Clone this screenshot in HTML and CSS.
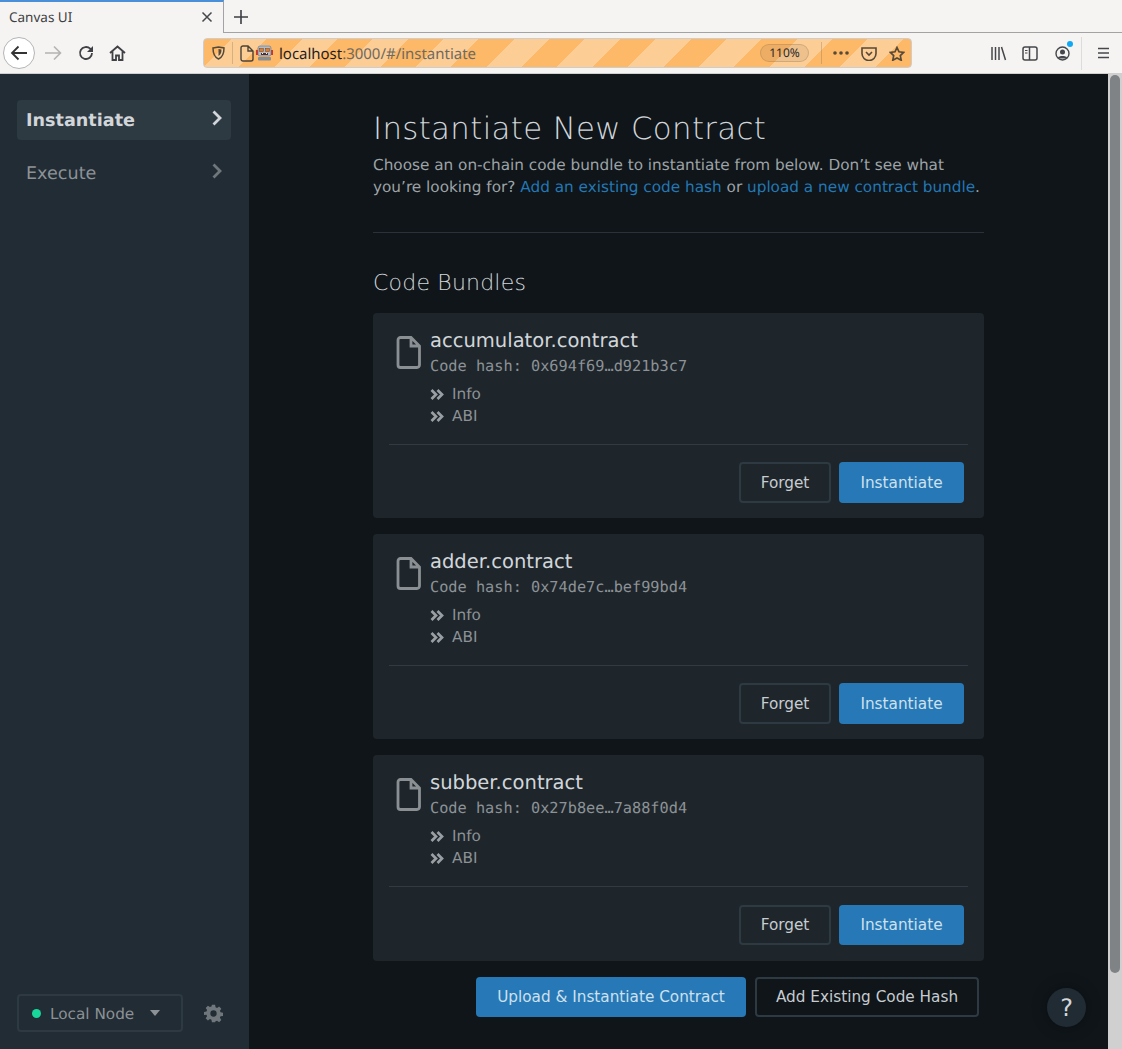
FILE: index.html
```html
<!DOCTYPE html>
<html lang="en">
<head>
    <meta charset="UTF-8">
    <meta name="viewport" content="width=device-width, initial-scale=1.0">
    <title>Canvas UI</title>
    <link rel="stylesheet" href="styles.css">
</head>
<body>

    <!-- Browser chrome -->
    <div class="tabbar">
        <div class="tab">
            <span class="tab-title">Canvas UI</span>
            <svg class="tab-close" width="12" height="12" viewBox="0 0 12 12"><path d="M1.5 1.5l9 9M10.5 1.5l-9 9" stroke="#45474b" stroke-width="1.5" fill="none"/></svg>
        </div>
        <svg class="new-tab" width="14" height="14" viewBox="0 0 14 14"><path d="M7 0v14M0 7h14" stroke="#3c3e42" stroke-width="1.6" fill="none"/></svg>
    </div>
    <div class="toolbar">
        <div class="back-circle">
            <svg width="18" height="16" viewBox="0 0 18 16"><path d="M17 8H2M8.5 1.5L2 8l6.5 6.500" stroke="#333" stroke-width="1.8" fill="none"/></svg>
        </div>
        <svg class="nav-forward" width="17" height="16" viewBox="0 0 17 16"><path d="M0 8h15M9 1.5L15.5 8 9 14.5" stroke="#b3b3b3" stroke-width="1.6" fill="none"/></svg>
        <svg class="nav-reload" width="16" height="16" viewBox="0 0 16 16"><path d="M14 8a6 6 0 1 1-1.8-4.3L14 5.500" stroke="#3f4145" stroke-width="1.8" fill="none"/><path d="M15 1v6H9z" fill="#3f4145"/></svg>
        <svg class="nav-home" width="17" height="16" viewBox="0 0 17 16"><path d="M1 8l7.500-6.500L16 8M3.500 6.500V15h3.500v-4.500h3V15h3.500V6.500" stroke="#3f4145" stroke-width="1.800" fill="none"/></svg>

        <div class="urlbar">
            <svg class="url-shield" width="13" height="14" viewBox="0 0 13 14"><path d="M1 2l5.500-1L12 2c0 5-1 9-5.500 11C2 11 1 7 1 2z" stroke="#55493a" stroke-width="1.500" fill="none"/><path d="M6.500 3l3 .6c0 3-.6 5-3 6.400z" fill="#55493a"/></svg>
            <span class="url-sep"></span>
            <svg class="url-page" width="14" height="17" viewBox="0 0 14 17"><path d="M1 3a2 2 0 0 1 2-2h5l5 5v8a2 2 0 0 1-2 2H3a2 2 0 0 1-2-2zM8 1v5h5" stroke="#4b4338" stroke-width="1.400" fill="none"/></svg>
            <svg class="url-robot" width="17" height="16" viewBox="0 0 17 16">
                <rect x="0" y="5" width="2" height="5" fill="#d0342c"/>
                <rect x="15" y="5" width="2" height="5" fill="#d0342c"/>
                <rect x="4" y="0" width="9" height="2" fill="#c4cad0"/>
                <rect x="2" y="1" width="13" height="10" rx="2" fill="#b4bbc1" stroke="#6b7077" stroke-width=".6"/>
                <rect x="3.500" y="3.500" width="4" height="3" fill="#e8791c" stroke="#5a4a40" stroke-width=".5"/>
                <rect x="9.500" y="3.500" width="4" height="3" fill="#e8791c" stroke="#5a4a40" stroke-width=".5"/>
                <rect x="5" y="8" width="7" height="2" fill="#5a2a24"/>
                <rect x="6" y="8" width="1" height="1" fill="#f2f2f2"/>
                <rect x="10" y="8" width="1" height="1" fill="#f2f2f2"/>
                <rect x="2" y="12" width="13" height="3.500" rx="1" fill="#868e95"/>
            </svg>
            <span class="url-text"><span class="url-host">localhost</span>:3000/#/instantiate</span>
            <span class="url-zoom">110%</span>
            <span class="url-sep url-sep-right"></span>
            <svg class="url-dots" width="16" height="4" viewBox="0 0 16 4"><circle cx="2" cy="2" r="1.800"/><circle cx="8" cy="2" r="1.800"/><circle cx="14" cy="2" r="1.800"/></svg>
            <svg class="url-pocket" width="16" height="15" viewBox="0 0 16 15"><path d="M1 2h14v5.500a7 7 0 0 1-14 0z" stroke="#55493a" stroke-width="1.600" fill="none"/><path d="M5 6l3 3 3-3" stroke="#55493a" stroke-width="1.600" fill="none"/></svg>
            <svg class="url-star" width="16" height="15" viewBox="0 0 16 15"><path d="M8 1.500l2 4.300 4.700.6-3.400 3.200.9 4.600L8 11.900l-4.200 2.300.9-4.600L1.300 6.400 6 5.800z" stroke="#55493a" stroke-width="1.700" fill="none"/></svg>
        </div>

        <svg class="tool-library" width="16" height="15" viewBox="0 0 16 15"><path d="M1 1v13M4.500 1v13M8 1v13M10.500 1l4 13" stroke="#45474b" stroke-width="1.500" fill="none"/></svg>
        <svg class="tool-sidebar" width="16" height="15" viewBox="0 0 16 15"><rect x="1" y="1" width="14" height="13" rx="2" stroke="#45474b" stroke-width="1.500" fill="none"/><path d="M7.500 1v13" stroke="#45474b" stroke-width="1.500"/><path d="M3 4.500h2.500M3 7h2.500" stroke="#45474b"/></svg>
        <div class="tool-account">
            <svg width="15" height="15" viewBox="0 0 15 15"><circle cx="7.500" cy="7.500" r="6.500" stroke="#45474b" stroke-width="1.400" fill="none"/><circle cx="7.500" cy="6" r="2.500" fill="#45474b"/><path d="M3 11.500c1-2 8-2 9 0v1H3z" fill="#45474b"/></svg>
            <span class="account-dot"></span>
        </div>
        <span class="tool-sep"></span>
        <svg class="tool-menu" width="13" height="12" viewBox="0 0 13 12"><path d="M1 1.500h11M1 6h11M1 10.500h11" stroke="#45474b" stroke-width="1.500"/></svg>
    </div>

    <div class="app">
        <!-- Side navigation -->
        <aside class="sidebar">
            <nav class="nav">
                <a class="nav-item active">
                    <span>Instantiate</span>
                    <svg width="10" height="16" viewBox="0 0 10 16"><path d="M1.500 1.500L8 8l-6.500 6.500" stroke="#d2d6da" stroke-width="2.800" fill="none"/></svg>
                </a>
                <a class="nav-item">
                    <span>Execute</span>
                    <svg width="10" height="16" viewBox="0 0 10 16"><path d="M1.500 1.500L8 8l-6.500 6.500" stroke="#6f767c" stroke-width="2.800" fill="none"/></svg>
                </a>
            </nav>
            <div class="node-row">
                <div class="node-select">
                    <span class="node-dot"></span>
                    <span class="node-name">Local Node</span>
                    <span class="node-caret"></span>
                </div>
                <svg class="node-gear" width="19" height="19" viewBox="0 0 24 24"><path fill="#6f767c" fill-rule="evenodd" d="M10 1h4l.6 3.100 1.900.8L19.100 3.100l2.800 2.800-1.800 2.600.8 1.900 3.100.6v4l-3.100.6-.8 1.900 1.800 2.600-2.800 2.800-2.600-1.800-1.900.8L14 23h-4l-.6-3.100-1.900-.8-2.600 1.800-2.800-2.800 1.800-2.600-.8-1.900L0 14.000v-4l3.100-.6.8-1.900-1.800-2.600 2.800-2.800 2.600 1.800 1.900-.8zM12 8a4 4 0 1 0 0 8 4 4 0 0 0 0-8z"/></svg>
            </div>
        </aside>

        <!-- Main content -->
        <main class="main">
            <div class="content">
                <h1>Instantiate New Contract</h1>
                <p class="intro">Choose an on-chain code bundle to instantiate from below. Don’t see what you’re looking for? <a>Add an existing code hash</a> or <a>upload a new contract bundle</a>.</p>
                <hr class="divider">
                <h2>Code Bundles</h2>

                <div class="card">
                    <div class="card-body">
                        <svg class="file-icon" width="25" height="33" viewBox="0 0 25 33"><path d="M2 4a2.500 2.500 0 0 1 2.500-2.500H15L23.500 10v19a2.500 2.500 0 0 1-2.500 2.500H4.500A2.500 2.500 0 0 1 2 29zM15 1.500V10h8.500" stroke="#8a8f93" stroke-width="2.800" fill="none"/></svg>
                        <div class="card-info">
                            <div class="card-title">accumulator.contract</div>
                            <div class="code-hash">Code hash: 0x694f69…d921b3c7</div>
                            <div class="toggles">
                                <div class="toggle"><svg width="14" height="11" viewBox="0 0 14 11"><path d="M1.500 1l4.500 4.500L1.500 10M7.500 1l4.500 4.500L7.500 10" stroke="#9a9fa3" stroke-width="2.700" fill="none"/></svg>Info</div>
                                <div class="toggle"><svg width="14" height="11" viewBox="0 0 14 11"><path d="M1.500 1l4.500 4.500L1.500 10M7.500 1l4.500 4.500L7.500 10" stroke="#9a9fa3" stroke-width="2.700" fill="none"/></svg>ABI</div>
                            </div>
                        </div>
                    </div>
                    <div class="card-actions">
                        <button class="btn btn-outline btn-forget">Forget</button>
                        <button class="btn btn-primary btn-instantiate">Instantiate</button>
                    </div>
                </div>

                <div class="card">
                    <div class="card-body">
                        <svg class="file-icon" width="25" height="33" viewBox="0 0 25 33"><path d="M2 4a2.500 2.500 0 0 1 2.500-2.500H15L23.500 10v19a2.500 2.500 0 0 1-2.500 2.500H4.500A2.500 2.500 0 0 1 2 29zM15 1.500V10h8.500" stroke="#8a8f93" stroke-width="2.800" fill="none"/></svg>
                        <div class="card-info">
                            <div class="card-title">adder.contract</div>
                            <div class="code-hash">Code hash: 0x74de7c…bef99bd4</div>
                            <div class="toggles">
                                <div class="toggle"><svg width="14" height="11" viewBox="0 0 14 11"><path d="M1.500 1l4.500 4.500L1.500 10M7.500 1l4.500 4.500L7.500 10" stroke="#9a9fa3" stroke-width="2.700" fill="none"/></svg>Info</div>
                                <div class="toggle"><svg width="14" height="11" viewBox="0 0 14 11"><path d="M1.500 1l4.500 4.500L1.500 10M7.500 1l4.500 4.500L7.500 10" stroke="#9a9fa3" stroke-width="2.700" fill="none"/></svg>ABI</div>
                            </div>
                        </div>
                    </div>
                    <div class="card-actions">
                        <button class="btn btn-outline btn-forget">Forget</button>
                        <button class="btn btn-primary btn-instantiate">Instantiate</button>
                    </div>
                </div>

                <div class="card">
                    <div class="card-body">
                        <svg class="file-icon" width="25" height="33" viewBox="0 0 25 33"><path d="M2 4a2.500 2.500 0 0 1 2.500-2.500H15L23.500 10v19a2.500 2.500 0 0 1-2.500 2.500H4.500A2.500 2.500 0 0 1 2 29zM15 1.500V10h8.500" stroke="#8a8f93" stroke-width="2.800" fill="none"/></svg>
                        <div class="card-info">
                            <div class="card-title">subber.contract</div>
                            <div class="code-hash">Code hash: 0x27b8ee…7a88f0d4</div>
                            <div class="toggles">
                                <div class="toggle"><svg width="14" height="11" viewBox="0 0 14 11"><path d="M1.500 1l4.500 4.500L1.500 10M7.500 1l4.500 4.500L7.500 10" stroke="#9a9fa3" stroke-width="2.700" fill="none"/></svg>Info</div>
                                <div class="toggle"><svg width="14" height="11" viewBox="0 0 14 11"><path d="M1.500 1l4.500 4.500L1.500 10M7.500 1l4.500 4.500L7.500 10" stroke="#9a9fa3" stroke-width="2.700" fill="none"/></svg>ABI</div>
                            </div>
                        </div>
                    </div>
                    <div class="card-actions">
                        <button class="btn btn-outline btn-forget">Forget</button>
                        <button class="btn btn-primary btn-instantiate">Instantiate</button>
                    </div>
                </div>

                <div class="page-actions">
                    <button class="btn btn-primary btn-upload">Upload &amp; Instantiate Contract</button>
                    <button class="btn btn-outline btn-existing">Add Existing Code Hash</button>
                </div>
            </div>
            <div class="help-btn">?</div>
        </main>

        <div class="scrollbar"><div class="scroll-thumb"></div></div>
    </div>

</body>
</html>
```

FILE: styles.css
```css
html, body {
    height: 100%;
}

body {
    margin: 0;
    height: 1049px;
    overflow: hidden;
    display: flex;
    flex-direction: column;
    font-family: "DejaVu Sans", sans-serif;
    text-rendering: geometricPrecision;
    background-color: #0f1519;
}

/* Browser chrome */
.tabbar {
    height: 33px;
    flex: none;
    display: flex;
    align-items: center;
    background-color: #f5f4f2;
    box-shadow: inset 0 -1px 0 #a3a3a3;
}

.tab {
    width: 224px;
    height: 33px;
    box-sizing: border-box;
    padding: 0 10px 2px 9px;
    display: flex;
    align-items: center;
    justify-content: space-between;
    border-top: 2px solid #4a90d9;
    border-right: 1px solid #a3a3a3;
    background-color: #f5f4f2;
    font-family: "Noto Sans", sans-serif;
    font-size: 13.500px;
    color: #3d3f42;
}

.new-tab {
    margin-left: 10px;
}

.toolbar {
    height: 41px;
    flex: none;
    box-sizing: border-box;
    display: flex;
    align-items: center;
    background-color: #f5f4f2;
    border-bottom: 1px solid #cfcfcf;
    padding-left: 3px;
}

.back-circle {
    width: 32px;
    height: 32px;
    box-sizing: border-box;
    display: flex;
    align-items: center;
    justify-content: center;
    border: 1px solid #b5b5b5;
    border-radius: 50%;
    background-color: #fff;
}

.nav-forward {
    margin-left: 10px;
}

.nav-reload {
    margin-left: 16px;
}

.nav-home {
    margin-left: 15px;
}

.urlbar {
    width: 709px;
    height: 30px;
    box-sizing: border-box;
    margin-left: 77px;
    display: flex;
    align-items: center;
    border: 1px solid #cdcdcd;
    border-radius: 4px;
    background-image: repeating-linear-gradient(135deg, #fdb868 0, #fdb868 19.400px, #fdcd96 19.400px, #fdcd96 44.400px, #fdb868 44.400px, #fdb868 50px);
}

.url-shield {
    margin-left: 8px;
}

.url-sep {
    width: 1px;
    height: 22px;
    margin-left: 7px;
    background-color: rgba(120, 110, 90, 0.3);
}

.url-page {
    margin-left: 7px;
}

.url-robot {
    margin-left: 2px;
}

.url-text {
    margin: 1px 0 0 6px;
    font-family: "Noto Sans", sans-serif;
    font-size: 14.960px;
    color: #6f6a5f;
}

.url-host {
    color: #1f1f1f;
}

.url-zoom {
    margin-left: auto;
    width: 49px;
    height: 18px;
    box-sizing: border-box;
    border: 1px solid rgba(120, 100, 70, 0.25);
    border-radius: 9px;
    background-color: rgba(120, 100, 70, 0.12);
    text-align: center;
    line-height: 16px;
    font-family: "Noto Sans", sans-serif;
    font-size: 12px;
    color: #2a2a2a;
}

.url-sep-right {
    margin-left: 12px;
}

.url-dots {
    margin-left: 11px;
    fill: #55493a;
}

.url-pocket {
    margin-left: 12px;
}

.url-star {
    margin: 0 6px 0 12px;
}

.tool-library {
    margin-left: 79px;
}

.tool-sidebar {
    margin-left: 15px;
}

.tool-account {
    position: relative;
    margin-left: 17px;
    height: 15px;
}

.account-dot {
    position: absolute;
    top: -5px;
    right: -3px;
    width: 6px;
    height: 6px;
    border-radius: 50%;
    background-color: #0fa8f5;
}

.tool-sep {
    width: 1px;
    height: 33px;
    margin-left: 11px;
    background-color: #dcdcdc;
}

.tool-menu {
    margin-left: 15px;
}

/* App */
.app {
    flex: 1;
    min-height: 0;
    display: flex;
}

.sidebar {
    width: 249px;
    flex: none;
    box-sizing: border-box;
    padding: 26px 18px 17px 17px;
    display: flex;
    flex-direction: column;
    justify-content: space-between;
    background-color: #222c34;
}

.nav {
    display: flex;
    flex-direction: column;
    gap: 13px;
}

.nav-item {
    height: 40px;
    box-sizing: border-box;
    padding: 2px 9px 0 9px;
    display: flex;
    align-items: center;
    justify-content: space-between;
    border-radius: 4px;
    font-size: 17.6px;
    color: #8d9296;
}

.nav-item svg {
    margin-top: -6px;
}

.nav-item.active {
    background-color: #2d3a42;
    font-weight: bold;
    color: #d2d6da;
}

.node-row {
    display: flex;
    align-items: center;
}

.node-select {
    width: 166px;
    height: 38px;
    box-sizing: border-box;
    padding: 0 21px 0 13px;
    display: flex;
    align-items: center;
    border: 2px solid #2d3a42;
    border-radius: 4px;
    font-size: 15.270px;
    color: #8d9296;
}

.node-dot {
    width: 9px;
    height: 9px;
    border-radius: 50%;
    background-color: #18d79b;
}

.node-name {
    margin: 2px 0 0 9px;
}

.node-caret {
    margin-left: auto;
    border-left: 5.500px solid transparent;
    border-right: 5.500px solid transparent;
    border-top: 6px solid #8d9296;
}

.node-gear {
    margin-left: 21px;
}

.main {
    position: relative;
    flex: 1;
    min-width: 0;
    display: flex;
    justify-content: center;
    background-color: #0f1519;
}

.content {
    width: 611px;
    padding-top: 35px;
}

h1 {
    margin: 0;
    font-size: 30.8px;
    font-weight: 200;
    line-height: 40px;
    letter-spacing: 0.350px;
    color: #d2d6da;
}

.intro {
    margin: 5px 0 0;
    font-size: 15.270px;
    line-height: 22px;
    color: #9ea3a7;
}

.intro a {
    color: #2378b5;
}

.divider {
    margin: 34px 0 0;
    border: none;
    border-top: 1px solid #29323a;
}

h2 {
    margin: 36px 0 14px;
    font-size: 22px;
    font-weight: 200;
    line-height: 30px;
    letter-spacing: 0.200px;
    color: #d2d6da;
}

.card {
    height: 205.300px;
    box-sizing: border-box;
    margin-bottom: 15.900px;
    padding: 0 16px;
    display: flex;
    flex-direction: column;
    border-radius: 4px;
    background-color: #1e262c;
}

.card-body {
    height: 132px;
    box-sizing: border-box;
    padding: 16px 0 0 7px;
    display: flex;
    border-bottom: 1px solid #303b43;
}

.file-icon {
    margin-top: 7px;
    flex: none;
}

.card-info {
    margin-left: 9px;
}

.card-title {
    font-size: 19.550px;
    line-height: 24px;
    color: #d2d6da;
}

.code-hash {
    margin-top: 2px;
    font-family: "DejaVu Sans Mono", monospace;
    font-size: 15.250px;
    line-height: 22px;
    color: #8d9296;
}

.toggles {
    margin-top: 6px;
}

.toggle {
    height: 22px;
    display: flex;
    align-items: center;
    font-size: 15.270px;
    color: #8d9296;
}

.toggle svg {
    margin-right: 8px;
}

.card-actions {
    padding: 17.300px 4px 0 0;
    display: flex;
    justify-content: flex-end;
    gap: 8px;
}

.btn {
    height: 40.400px;
    box-sizing: border-box;
    padding-top: 2px;
    border-radius: 4px;
    font-family: "DejaVu Sans", sans-serif;
    font-size: 15.270px;
    cursor: pointer;
}

.btn-primary {
    border: none;
    background-color: #2679b6;
    color: #cfe0ee;
}

.btn-outline {
    border: 2px solid #2d3a42;
    background-color: transparent;
    color: #c8ccd0;
}

.btn-forget {
    width: 92px;
}

.btn-instantiate {
    width: 125px;
}

.page-actions {
    display: flex;
    justify-content: flex-end;
    gap: 9px;
    padding-right: 5px;
}

.btn-upload {
    width: 270px;
}

.btn-existing {
    width: 224px;
}

.help-btn {
    position: absolute;
    right: 22px;
    bottom: 22px;
    width: 39px;
    height: 39px;
    display: flex;
    align-items: center;
    justify-content: center;
    border-radius: 50%;
    background-color: #202b33;
    box-shadow: 0 0 16px rgba(0, 0, 0, 0.3);
    font-size: 24px;
    color: #d2d6da;
}

.scrollbar {
    width: 14px;
    flex: none;
    box-sizing: border-box;
    padding: 1px 2px;
    background-color: #d0d0d0;
}

.scroll-thumb {
    height: 898px;
    border-radius: 5px;
    background-color: #7f8386;
}
```
